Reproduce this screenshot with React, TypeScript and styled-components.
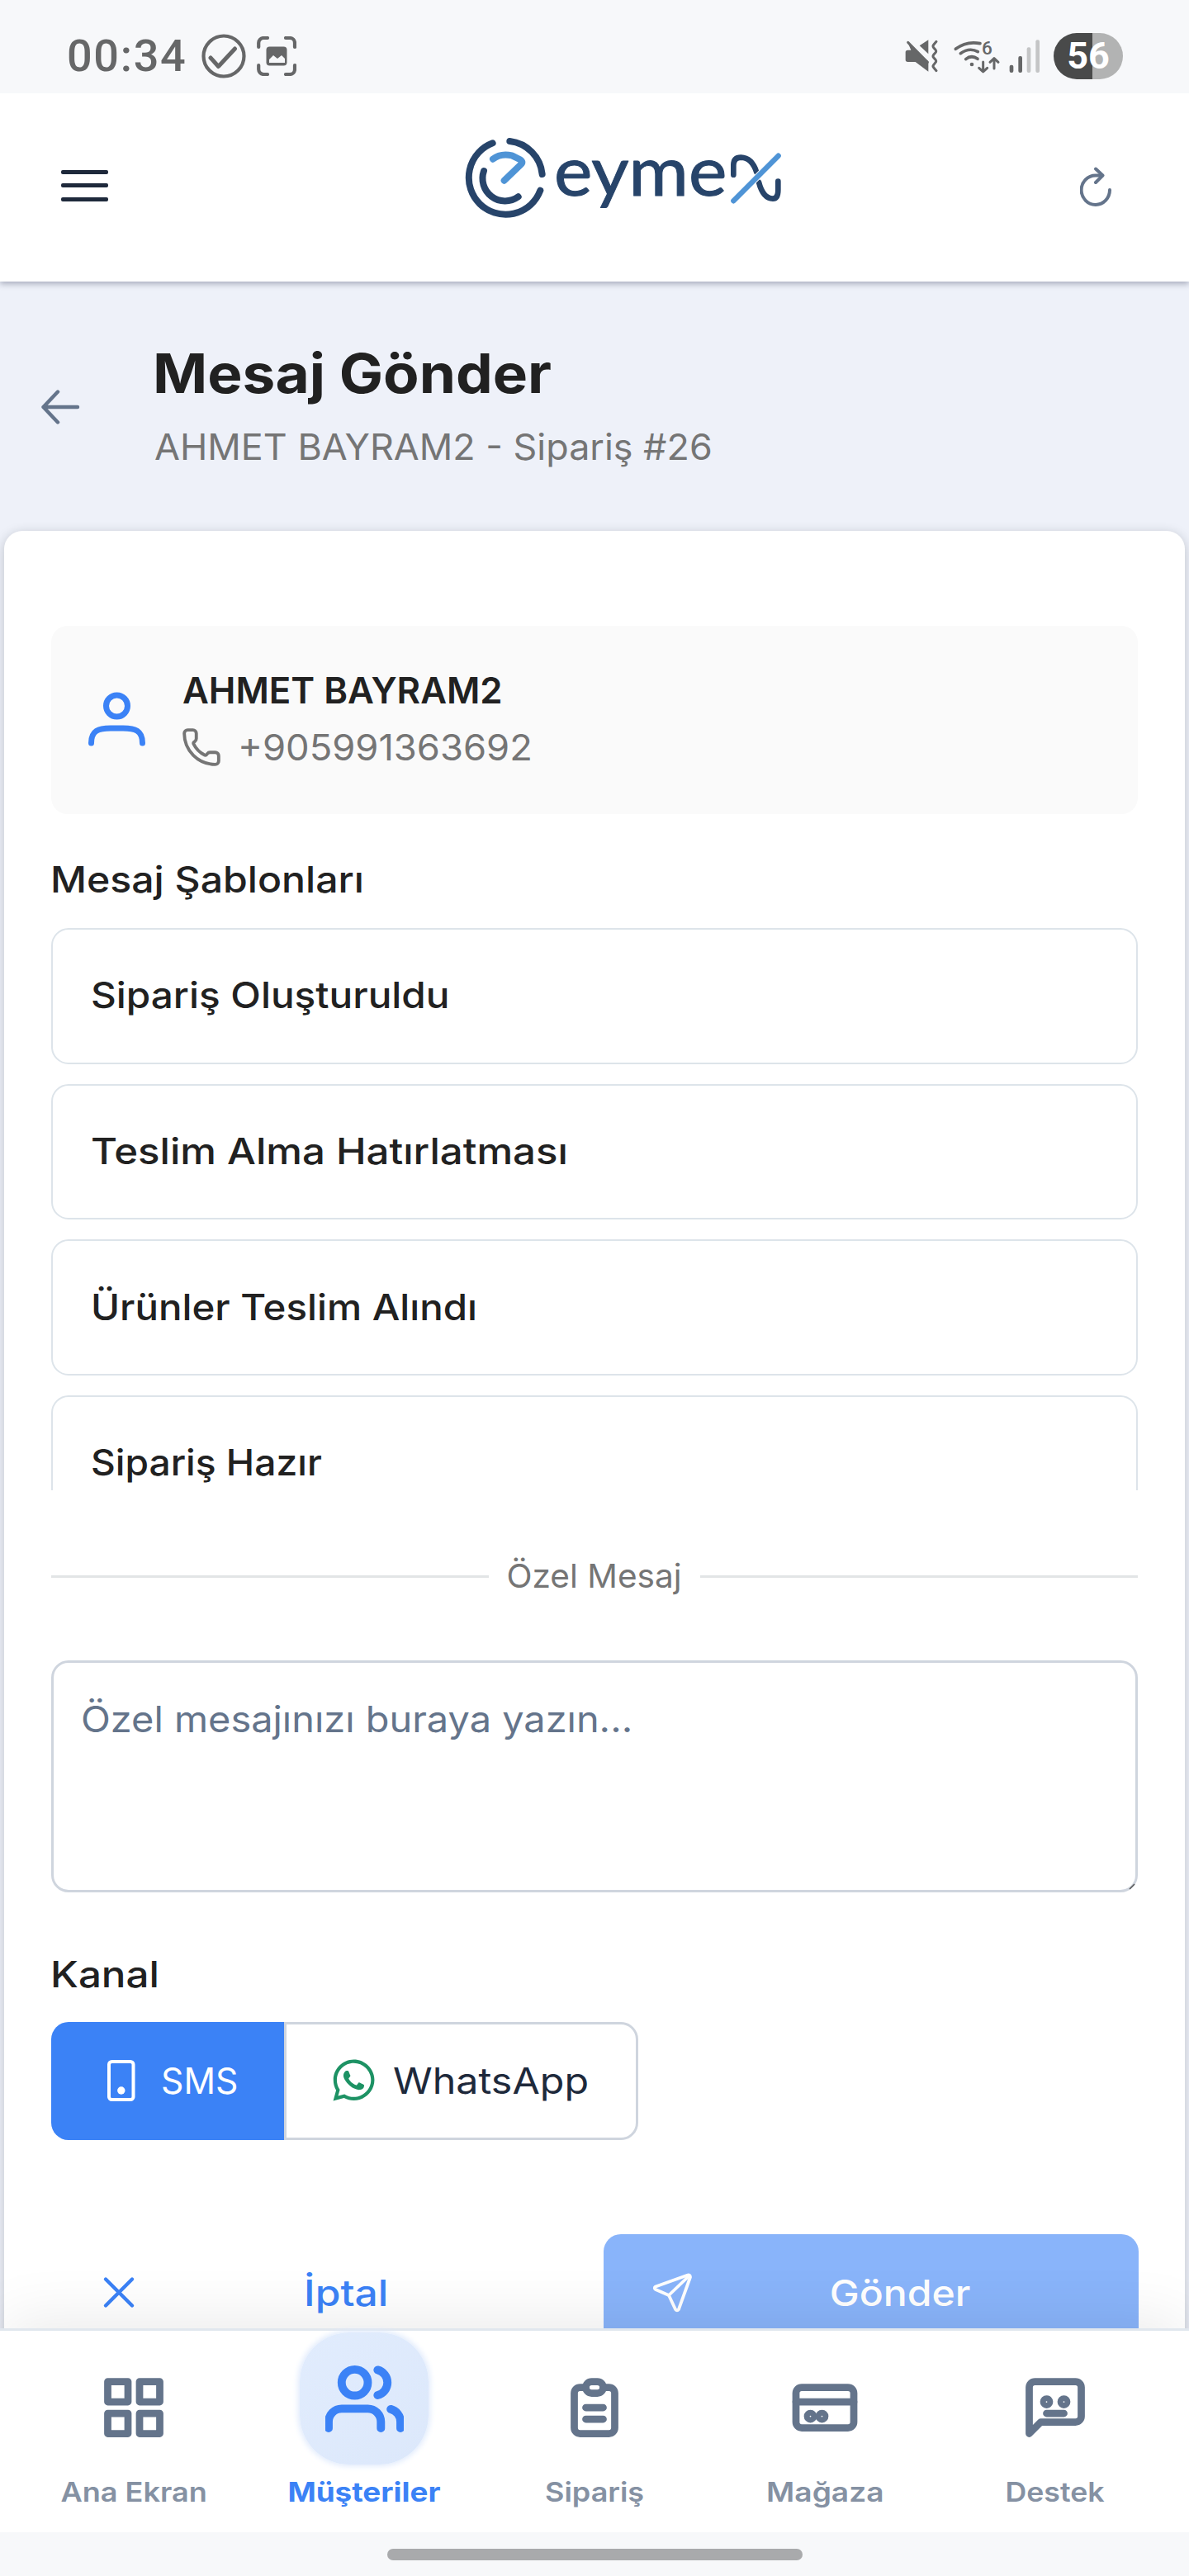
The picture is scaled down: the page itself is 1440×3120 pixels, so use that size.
import React from "react";
import styled, { createGlobalStyle, css } from "styled-components";
import { Phone } from "lucide-react";
import { FaWhatsapp } from "react-icons/fa";

const GlobalStyle = createGlobalStyle`
  *, *::before, *::after { box-sizing: border-box; }
  html, body { margin: 0; padding: 0; background: #f7f8fa; }
  body { font-family: "Inter", "Open Sans", sans-serif; color: #212121; }
  svg { display: block; flex: none; }
`;

const Screen = styled.div`
  width: 1440px;
  height: 3120px;
  display: flex;
  flex-direction: column;
  overflow: hidden;
  background: #f7f8fa;
`;

const Label = styled.span<{ $wide?: number; $center?: boolean }>`
  display: inline-block;
  white-space: pre;
  transform: scaleX(${(p) => p.$wide ?? 1});
  transform-origin: ${(p) => (p.$center ? "center" : "left")} center;
`;

/* ---------- Status bar ---------- */
const StatusBar = styled.div`
  flex: none;
  height: 113px;
  padding: 23px 80px 0 81px;
  display: flex;
  align-items: center;
  justify-content: space-between;
  background: #f7f8fa;
  font-family: "Roboto", sans-serif;
  color: #666768;
`;
const StatusGroup = styled.div`
  display: flex;
  align-items: center;
`;
const Clock = styled.span`
  font-size: 54px;
  line-height: 64px;
  font-weight: 500;
  letter-spacing: 1.67px;
  margin-right: 18px;
`;
const Battery = styled.div`
  width: 84px;
  height: 56px;
  margin-left: 16px;
  border-radius: 28px;
  background: linear-gradient(90deg, #494a4a 0 47px, #b2b3b3 47px);
  display: flex;
  align-items: center;
  justify-content: center;
  color: #fff;
  font-size: 45px;
  line-height: 56px;
  font-weight: 700;
`;

/* ---------- Header ---------- */
const Header = styled.header`
  flex: none;
  height: 228px;
  padding: 0 94px 0 74px;
  display: flex;
  justify-content: space-between;
  align-items: flex-start;
  background: #fff;
  box-shadow: 0 3px 7px rgba(30, 35, 70, 0.33);
  clip-path: inset(0 0 -20px 0);
  z-index: 2;
`;
const MenuButton = styled.div`
  width: 57px;
  margin-top: 92.5px;
  display: flex;
  flex-direction: column;
  gap: 11.2px;
`;
const MenuLine = styled.span`
  height: 5.4px;
  border-radius: 2px;
  background: #1e293b;
`;
const LogoBox = styled.div`
  margin: 37px 0 0 61px;
`;
const RefreshBox = styled.div`
  margin-top: 89px;
`;

/* ---------- Page ---------- */
const Page = styled.main`
  flex: 1;
  min-height: 0;
  overflow: hidden;
  display: flex;
  flex-direction: column;
  background: #eef1f9;
`;
const Heading = styled.div`
  flex: none;
  height: 302px;
  padding: 61px 0 0 50px;
  display: flex;
  align-items: flex-start;
  gap: 90px;
`;
const BackBox = styled.div`
  margin-top: 70px;
`;
const Titles = styled.div`
  display: flex;
  flex-direction: column;
  gap: 6px;
`;
const Title = styled.h1`
  margin: 0 0 0 -2px;
  font-size: 66px;
  line-height: 100px;
  font-weight: 700;
`;
const Subtitle = styled.div`
  font-size: 44px;
  line-height: 66px;
  color: #757575;
`;
const Card = styled.section`
  flex: 1 0 auto;
  margin: 0 5px;
  padding: 115px 57px 0;
  display: flex;
  flex-direction: column;
  background: #fff;
  border-radius: 22px 22px 0 0;
  box-shadow: 0 3px 14px rgba(25, 32, 36, 0.22);
`;

const Customer = styled.div`
  height: 228px;
  padding: 0 45px 3px;
  display: flex;
  align-items: center;
  gap: 45px;
  border-radius: 20px;
  background: #fafafa;
`;
const CustomerText = styled.div`
  display: flex;
  flex-direction: column;
  font-size: 44px;
  line-height: 69px;
`;
const CustomerName = styled.div`
  font-weight: 600;
`;
const CustomerPhone = styled.div`
  display: flex;
  align-items: center;
  gap: 19px;
  color: #757575;
`;

const FieldLabel = styled.div<{ $top: number; $bottom: number }>`
  margin: ${(p) => p.$top}px 0 ${(p) => p.$bottom}px -1px;
  font-size: 44px;
  line-height: 66px;
  font-weight: 500;
`;
const TemplateList = styled.div`
  height: 681px;
  overflow: hidden;
  display: flex;
  flex-direction: column;
  gap: 24px;
`;
const Template = styled.div`
  flex: none;
  height: 164.7px;
  padding: 0 46px 2px;
  display: flex;
  align-items: center;
  border: 2px solid #dde4ea;
  border-radius: 21px;
  font-size: 44px;
  font-weight: 500;
`;
const Divider = styled.div`
  margin: 74px 0 72px;
  display: flex;
  align-items: center;
  gap: 23px;
  color: #757575;
  font-size: 40px;
  line-height: 60px;
`;
const DividerLine = styled.span`
  flex: 1;
  height: 3px;
  background: #e2e5e6;
`;
const MessageBox = styled.div`
  height: 281px;
  padding: 35px 0 0 33px;
  display: flex;
  justify-content: space-between;
  border: 3px solid #cfd5de;
  border-radius: 21px;
  color: #64748b;
  font-size: 44px;
  line-height: 66px;
`;
const Resizer = styled.div`
  align-self: flex-end;
`;

const Segments = styled.div`
  display: flex;
  height: 143px;
`;
const Segment = styled.div<{ $active?: boolean }>`
  display: flex;
  align-items: center;
  font-size: 44px;
  padding-bottom: 2px;
  ${(p) =>
    p.$active
      ? css`
          width: 282px;
          padding-left: 68px;
          gap: 31px;
          color: #fff;
          background: #3b82f6;
          border-radius: 21px 0 0 21px;
        `
      : css`
          width: 429px;
          padding-left: 53px;
          gap: 19px;
          color: #1e293b;
          background: #fff;
          border: 3px solid #cfd5de;
          border-radius: 0 21px 21px 0;
        `}
`;

const Actions = styled.div`
  margin-top: 114px;
  display: grid;
  grid-template-columns: 648px 648px;
  gap: 21px;
`;
const ActionButton = styled.div<{ $primary?: boolean }>`
  height: 141px;
  padding: ${(p) => (p.$primary ? "0 37px 0 59px" : "0 40px 0 58px")};
  display: flex;
  align-items: center;
  border-radius: 21px;
  font-size: 44px;
  font-weight: 500;
  color: ${(p) => (p.$primary ? "#fff" : "#3b82f6")};
  background: ${(p) => (p.$primary ? "#89b4fa" : "transparent")};
`;
const ActionText = styled.div`
  flex: 1;
  text-align: center;
`;

/* ---------- Bottom navigation ---------- */
const BottomNav = styled.nav`
  flex: none;
  height: 247px;
  padding: 2px 22.5px 0;
  display: grid;
  grid-template-columns: repeat(5, 1fr);
  background: #fff;
  border-top: 3px solid #e1e7ee;
  box-shadow: 0 -14px 70px -6px rgba(0, 0, 0, 0.085);
  clip-path: inset(-120px 0 0 0);
  z-index: 3;
`;
const NavItem = styled.div<{ $active?: boolean }>`
  display: flex;
  flex-direction: column;
  align-items: center;
  gap: 11px;
  font-size: 33px;
  line-height: 44px;
  font-weight: ${(p) => (p.$active ? 700 : 600)};
  color: ${(p) => (p.$active ? "#3b82f6" : "#8591a3")};
`;
const NavIcon = styled.div<{ $active?: boolean }>`
  width: 156px;
  height: 160px;
  display: flex;
  align-items: center;
  justify-content: center;
  color: ${(p) => (p.$active ? "#3b82f6" : "#64748b")};
  ${(p) =>
    p.$active
      ? css`
          border-radius: 60px;
          background: linear-gradient(135deg, #e1ecfd, #dce8fb);
          box-shadow: 0 0 7px 2px #dfeafc;
        `
      : css`
          padding-top: 22px;
        `}
`;

const GestureArea = styled.div`
  flex: none;
  height: 53px;
  padding-top: 20px;
  display: flex;
  justify-content: center;
  background: #f7f8fa;
`;
const GesturePill = styled.div`
  width: 503px;
  height: 14px;
  border-radius: 7px;
  background: #a9aaac;
`;

/* ---------- Drawings ---------- */
const CheckBadge = () => (
  <svg width="54" height="54" viewBox="0 0 54 54" fill="none" stroke="#666768" strokeWidth="4.2">
    <circle cx="27" cy="27" r="24.5" />
    <path d="M11 29l9.5 10.5L40.500 18" strokeWidth="5" strokeLinecap="round" strokeLinejoin="round" />
  </svg>
);

const CaptureSvg = styled.svg`
  margin-left: 13px;
`;
const CaptureIcon = () => (
  <CaptureSvg width="48" height="48" viewBox="0 0 48 48" fill="none">
    <path
      d="M2.200 13V8a6 6 0 0 1 6-6H13M35 2h5a6 6 0 0 1 6 6v5M46 35v5a6 6 0 0 1-6 6h-5M13 46H8.200a6 6 0 0 1-6-6v-5"
      stroke="#666768"
      strokeWidth="4.200"
      strokeLinecap="round"
    />
    <rect x="11.500" y="12.500" width="25" height="23" rx="4" fill="#666768" />
    <path d="M15 32v-4l5-5 5 4 5-4 4 4v5z" fill="#f7f8fa" />
  </CaptureSvg>
);

const MuteVibrate = () => (
  <svg width="42" height="42" viewBox="43 49 126 126">
    <path d="M56 62L82 90 131 131V168L84 133H56a8 8 0 0 1-8-8V98a8 8 0 0 1 8-8h12z" fill="#666768" />
    <path d="M57 62L128 134" stroke="#666768" strokeWidth="9" strokeLinecap="round" />
    <path d="M99 74L131 53V104z" fill="#666768" />
    <path
      d="M160 59L150 71Q146 76 150 81L157 89Q161 94 157 99L150 107Q146 112 150 117L157 125Q161 130 157 135L150 144Q146 149 150 153L160 165"
      fill="none"
      stroke="#666768"
      strokeWidth="9"
      strokeLinecap="round"
      strokeLinejoin="round"
    />
  </svg>
);

const WifiSvg = styled.svg`
  margin-left: 18px;
  overflow: visible;
`;
const WifiIcon = () => (
  <WifiSvg width="56" height="42" viewBox="223 50 168 126" fill="none" stroke="#666768" strokeWidth="11" strokeLinecap="round">
    <path d="M230 87Q270 57 319 67M248 103q32-23 63-6M267 124q21-17 43-1" />
    <circle cx="289" cy="143" r="7" fill="#666768" stroke="none" />
    <path d="M330 134v34M315 156l15 14 15-14M370 158v-36M355 135l15-14 15 14" strokeWidth="9" strokeLinejoin="round" />
    <text x="325" y="107" fontSize="68" fontWeight="500" fontFamily="Roboto, sans-serif" fill="#666768" stroke="none">
      6
    </text>
  </WifiSvg>
);

const SignalSvg = styled.svg`
  margin-left: 11px;
`;
const SignalIcon = () => (
  <SignalSvg width="38" height="42" viewBox="425 50 114 126">
    <rect x="427" y="145" width="14" height="28" rx="6" fill="#666768" />
    <rect x="459" y="113" width="14" height="60" rx="6" fill="#666768" />
    <rect x="490" y="81" width="14" height="92" rx="6" fill="#c4c5c6" />
    <rect x="522" y="54" width="14" height="119" rx="6" fill="#c4c5c6" />
  </SignalSvg>
);

const Logo = () => (
  <svg width="420" height="130" viewBox="0 0 1260 390" fill="none" strokeLinecap="round" strokeLinejoin="round" role="img" aria-label="eymex">
    <g stroke="#27446a" strokeWidth="24">
      <path d="M232 63A134 134 0 0 1 350 183" />
      <path d="M170 70A134 134 0 1 0 343 242" />
      <path d="M138 171A82 82 0 0 0 263 265" />
    </g>
    <path d="M171 128Q198 106 240 115L268 129Q284 138 272 148L212 206" stroke="#4f94d6" strokeWidth="24" />
    <text
      x="393"
      y="260"
      textLength="628"
      lengthAdjust="spacingAndGlyphs"
      fontFamily="Lato, sans-serif"
      fontSize="250"
      fontWeight="400"
      fill="#27446a"
      stroke="#27446a"
      strokeWidth="3"
    >
      eyme
    </text>
    <g stroke="#27446a" strokeWidth="20">
      <path d="M1045 185V150Q1045 122 1072 122Q1112 123 1129 176" />
      <path d="M1137 212Q1152 271 1188 272Q1207 272 1207 240V209" />
    </g>
    <path d="M1045 280L1208 116" stroke="#fff" strokeWidth="25" strokeLinecap="butt" />
    <path d="M1045 280L1208 116" stroke="#4f94d6" strokeWidth="19" />
  </svg>
);

const RefreshIcon = () => (
  <svg width="38" height="48" viewBox="0 0 38 48" fill="none" stroke="#64748b" strokeWidth="4" strokeLinecap="round" strokeLinejoin="round">
    <path d="M36 28A17.200 17.700 0 1 1 18.800 10.500H27" />
    <path d="M19 2.500L27.500 10.500 19 19" />
  </svg>
);

const BackArrow = () => (
  <svg width="47" height="42" viewBox="0 0 47 42" fill="none" stroke="#64748b" strokeWidth="4.400" strokeLinecap="round" strokeLinejoin="round">
    <path d="M2.500 21H44M20 2.500L2.500 21 20 39.500" />
  </svg>
);

const UserIcon = () => (
  <svg width="69" height="66" viewBox="0 0 69 66" fill="none" stroke="#3b82f6" strokeWidth="7" strokeLinecap="round">
    <circle cx="34.500" cy="17" r="13" />
    <path d="M3.500 62C3.500 47 12 44 27 44H42C57 44 65.500 47 65.500 62" />
  </svg>
);

const MobileIcon = () => (
  <svg width="34" height="50" viewBox="0 0 34 50" fill="none">
    <rect x="2" y="2" width="29.500" height="46" rx="3.500" stroke="#fff" strokeWidth="4" />
    <circle cx="16.800" cy="37" r="4.700" fill="#fff" />
  </svg>
);

const CloseIcon = () => (
  <svg width="48" height="48" viewBox="0 0 48 48" stroke="#3b82f6" strokeWidth="4.400" strokeLinecap="round">
    <path d="M8 7.500L40 39.500M40 7.500L8 39.500" />
  </svg>
);

const SendIcon = () => (
  <svg width="48" height="48" viewBox="0 0 48 48" fill="none" stroke="#fff" strokeWidth="3.800" strokeLinecap="round" strokeLinejoin="round">
    <path d="M43 2.500L4 16.500Q1.500 18 4 20L20 27 28 44Q30 46.500 32 44L46 5Q46 2 43 2.500Z" />
    <path d="M20 27L44.500 3.500" />
  </svg>
);

const PhoneGlyph = styled(Phone)`
  margin-left: -2px;
`;

const NavGlyph = ({ size = 84, children }: { size?: number; children: React.ReactNode }) => (
  <svg width={size} height={size} viewBox="0 0 24 24" fill="none" stroke="currentColor" strokeWidth="2.500" strokeLinecap="round" strokeLinejoin="round">
    {children}
  </svg>
);

const templates: [string, number][] = [
  ["Sipariş Oluşturuldu", 1.084],
  ["Teslim Alma Hatırlatması", 1.117],
  ["Ürünler Teslim Alındı", 1.078],
  ["Sipariş Hazır", 1.049],
];

const navItems: { text: string; wide: number; active?: boolean; icon: React.ReactNode }[] = [
  {
    text: "Ana Ekran",
    wide: 1.094,
    icon: (
      <NavGlyph>
        <path d="M3 3h7v7H3zM14 3h7v7h-7zM14 14h7v7h-7zM3 14h7v7H3z" />
      </NavGlyph>
    ),
  },
  {
    text: "Müşteriler",
    wide: 1.116,
    active: true,
    icon: (
      <NavGlyph size={95}>
        <circle cx="9" cy="7" r="4" />
        <path d="M17 21v-2a4 4 0 0 0-4-4H5a4 4 0 0 0-4 4v2M23 21v-2a4 4 0 0 0-3-3.870M16 3.130a4 4 0 0 1 0 7.750" />
      </NavGlyph>
    ),
  },
  {
    text: "Sipariş",
    wide: 1.09,
    icon: (
      <NavGlyph>
        <path d="M9 5H7a2 2 0 0 0-2 2v12a2 2 0 0 0 2 2h10a2 2 0 0 0 2-2V7a2 2 0 0 0-2-2h-2" />
        <rect x="9" y="3" width="6" height="4" rx="2" />
        <path d="M9 12h6M9 16h6" />
      </NavGlyph>
    ),
  },
  {
    text: "Mağaza",
    wide: 1.125,
    icon: (
      <NavGlyph>
        <rect x="2" y="5" width="20" height="14" rx="2" />
        <path d="M2 10h20" />
        <circle cx="7" cy="15" r="1" />
        <circle cx="11" cy="15" r="1" />
      </NavGlyph>
    ),
  },
  {
    text: "Destek",
    wide: 1.08,
    icon: (
      <NavGlyph>
        <path d="M21 15a2 2 0 0 1-2 2H7l-4 4V5a2 2 0 0 1 2-2h14a2 2 0 0 1 2 2z" />
        <circle cx="9" cy="10" r="1" />
        <circle cx="15" cy="10" r="1" />
        <path d="M9 14h6" />
      </NavGlyph>
    ),
  },
];

export default function App() {
  return (
    <Screen>
      <GlobalStyle />
      <StatusBar>
        <StatusGroup>
          <Clock>00:34</Clock>
          <CheckBadge />
          <CaptureIcon />
        </StatusGroup>
        <StatusGroup>
          <MuteVibrate />
          <WifiIcon />
          <SignalIcon />
          <Battery>56</Battery>
        </StatusGroup>
      </StatusBar>

      <Header>
        <MenuButton>
          <MenuLine />
          <MenuLine />
          <MenuLine />
        </MenuButton>
        <LogoBox>
          <Logo />
        </LogoBox>
        <RefreshBox>
          <RefreshIcon />
        </RefreshBox>
      </Header>

      <Page>
        <Heading>
          <BackBox>
            <BackArrow />
          </BackBox>
          <Titles>
            <Title>
              <Label $wide={1.077}>Mesaj Gönder</Label>
            </Title>
            <Subtitle>
              <Label $wide={1.02}>AHMET BAYRAM2 - Sipariş #26</Label>
            </Subtitle>
          </Titles>
        </Heading>

        <Card>
          <Customer>
            <UserIcon />
            <CustomerText>
              <CustomerName>
                <Label $wide={0.994}>AHMET BAYRAM2</Label>
              </CustomerName>
              <CustomerPhone>
                <PhoneGlyph size={50} strokeWidth={1.85} />
                <Label $wide={1.03}>+905991363692</Label>
              </CustomerPhone>
            </CustomerText>
          </Customer>

          <FieldLabel $top={46} $bottom={26}>
            <Label $wide={1.095}>Mesaj Şablonları</Label>
          </FieldLabel>
          <TemplateList>
            {templates.map(([text, wide]) => (
              <Template key={text}>
                <Label $wide={wide}>{text}</Label>
              </Template>
            ))}
          </TemplateList>

          <Divider>
            <DividerLine />
            <Label $wide={1.015} $center>
              Özel Mesaj
            </Label>
            <DividerLine />
          </Divider>

          <MessageBox>
            <Label $wide={1.066}>Özel mesajınızı buraya yazın...</Label>
            <Resizer>
              <svg width="8" height="8" viewBox="0 0 8 8" stroke="#555" strokeWidth="1.500">
                <path d="M1 7L7 1" />
              </svg>
            </Resizer>
          </MessageBox>

          <FieldLabel $top={66} $bottom={25}>
            <Label $wide={1.12}>Kanal</Label>
          </FieldLabel>
          <Segments>
            <Segment $active>
              <MobileIcon />
              <Label $wide={0.97}>SMS</Label>
            </Segment>
            <Segment>
              <FaWhatsapp size={57} color="#1d9264" />
              <Label $wide={1.1}>WhatsApp</Label>
            </Segment>
          </Segments>

          <Actions>
            <ActionButton>
              <CloseIcon />
              <ActionText>
                <Label $wide={1.13} $center>
                  İptal
                </Label>
              </ActionText>
            </ActionButton>
            <ActionButton $primary>
              <SendIcon />
              <ActionText>
                <Label $wide={1.094} $center>
                  Gönder
                </Label>
              </ActionText>
            </ActionButton>
          </Actions>
        </Card>
      </Page>

      <BottomNav>
        {navItems.map((item) => (
          <NavItem key={item.text} $active={item.active}>
            <NavIcon $active={item.active}>{item.icon}</NavIcon>
            <Label $wide={item.wide} $center>
              {item.text}
            </Label>
          </NavItem>
        ))}
      </BottomNav>
      <GestureArea>
        <GesturePill />
      </GestureArea>
    </Screen>
  );
}
